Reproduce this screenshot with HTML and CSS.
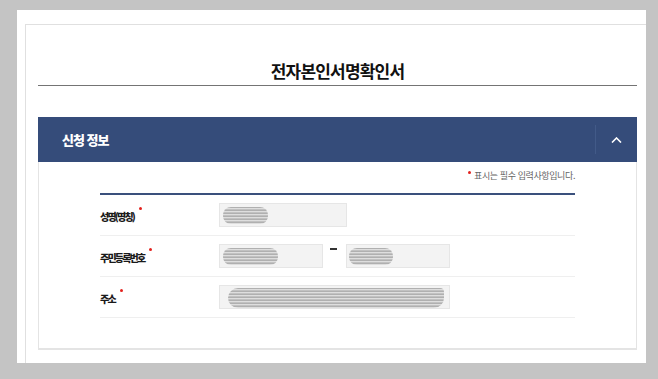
FILE: index.html
```html
<!DOCTYPE html>
<html lang="ko">
<head>
  <meta charset="UTF-8" />
  <title>전자본인서명확인서</title>
  <meta name="viewport" content="width=device-width, initial-scale=1.0"/>
  <link rel="stylesheet" href="styles.css">
</head>
<body>
  <div class="page">
    <div class="inner">
      <!-- 제목 -->
      <h2 class="doc-title">전자본인서명확인서</h2>

      <!-- 신청 정보 -->
      <div class="section">
        <div class="section-head">
          <h3>신청 정보</h3>
          <button class="toggle-btn" type="button" aria-label="접기">
            <svg width="11" height="6" viewBox="0 0 11 6">
              <polyline points="1,5.5 5.5,1 10,5.5" fill="none" stroke="#fff" stroke-width="1.6"/>
            </svg>
          </button>
        </div>

        <div class="section-body">
          <p class="required-note"><span class="req"></span>표시는 필수 입력사항입니다.</p>

          <div class="form-table">
            <div class="form-row">
              <div class="label">성명(명칭)<span class="req"></span></div>
              <div class="field">
                <div class="input w-name"><span class="blur b1"></span></div>
              </div>
            </div>
            <div class="form-row">
              <div class="label">주민등록번호<span class="req"></span></div>
              <div class="field">
                <div class="input w-half"><span class="blur b2"></span></div>
                <span class="dash"></span>
                <div class="input w-half"><span class="blur b3"></span></div>
              </div>
            </div>
            <div class="form-row">
              <div class="label">주소<span class="req"></span></div>
              <div class="field">
                <div class="input w-full"><span class="blur b4"></span></div>
              </div>
            </div>
          </div>
        </div>
      </div>
    </div>
  </div>
</body>
</html>
```

FILE: styles.css
```css
body {
  margin: 0;
  padding: 10px 0 0 17px;
  background: #c4c4c4;
  font-family: "Noto Sans CJK KR", "Noto Sans", sans-serif;
  color: #222;
  overflow: hidden;
}

/* ======================
   흰색 패널
   ====================== */
.page {
  width: 629px;
  height: 353px;
  background: #fff;
  padding: 14px 0 0 8px;
  box-sizing: border-box;
}
.inner {
  height: 100%;
  border-left: 1px solid #e0e0e0;
  border-top: 1px solid #e0e0e0;
  padding: 0 9px 0 12px;
  box-sizing: border-box;
}

.doc-title {
  margin: 0;
  padding: 33px 0 2px;
  line-height: 25px;
  font-size: 17px;
  font-weight: bold;
  letter-spacing: -0.8px;
  text-align: center;
  color: #111;
  border-bottom: 1px solid #747474;
}

/* ======================
   신청 정보 섹션
   ====================== */
.section {
  margin-top: 31px;
}
.section-head {
  display: flex;
  align-items: center;
  height: 45px;
  background: #354c7a;
}
.section-head h3 {
  flex: 1;
  margin: 0;
  padding-left: 24px;
  font-size: 13px;
  font-weight: 900;
  letter-spacing: -1px;
  color: #fff;
}
.toggle-btn {
  width: 42px;
  height: 29px;
  padding: 0;
  border: none;
  border-left: 1px solid #425a88;
  background: transparent;
  display: flex;
  align-items: center;
  justify-content: center;
  cursor: pointer;
}

.section-body {
  border: 1px solid #e4e4e4;
  border-top: none;
  border-bottom-width: 2px;
  padding: 7px 61px 30px;
}

.required-note {
  margin: 0 0 10px;
  line-height: 14px;
  font-size: 9px;
  letter-spacing: -0.4px;
  color: #666;
  text-align: right;
}
.required-note .req {
  margin: 0 3px 0 0;
  vertical-align: 5px;
}

/* 필수 표시 빨간 점 */
.req {
  display: inline-block;
  width: 3px;
  height: 3px;
  border-radius: 50%;
  background: #e3211d;
  margin-left: 5px;
  vertical-align: 11px;
}

.form-table {
  border-top: 2px solid #3a507c;
}
.form-row {
  display: flex;
  align-items: center;
  height: 40px;
  border-bottom: 1px solid #efefef;
}
.label {
  width: 119px;
  font-size: 10px;
  font-weight: 900;
  letter-spacing: -1.8px;
  color: #1a1a1a;
}
.field {
  display: flex;
  align-items: flex-start;
}
.input {
  position: relative;
  height: 24px;
  background: #f3f3f3;
  border: 1px solid #e6e6e6;
  box-sizing: border-box;
  overflow: hidden;
}
.w-name { width: 128px; }
.w-half { width: 104px; }
.w-full { width: 231px; }

.dash {
  width: 7px;
  height: 2px;
  margin: 4px 9px 0 7px;
  background: #333;
}

/* 가려진 입력값 */
.blur {
  position: absolute;
  top: 3px;
  height: 17px;
  border-radius: 8px;
  background: repeating-linear-gradient(180deg, #a9a9a9 0 1px, #dcdcdc 1px 2px, #bcbcbc 2px 3px);
  filter: blur(0.6px);
  opacity: 0.9;
}
.b1 { left: 3px; width: 45px; }
.b2 { left: 3px; width: 55px; }
.b3 { left: 2px; width: 44px; }
.b4 { left: 8px; width: 216px; top: 2px; height: 20px; border-radius: 10px 4px 10px 10px; }
```
